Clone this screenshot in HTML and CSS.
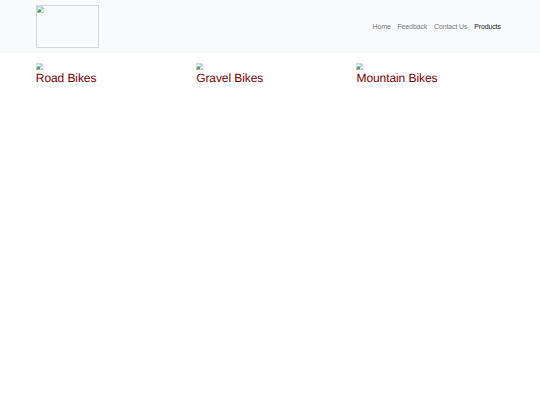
FILE: index.html
```
<!DOCTYPE html>
<html lang="en">
<head>
    <meta charset="utf-8">
    <meta name="viewport" content="width=device-width, initial-scale=1.0">
    <title>Products</title>
    <link rel="stylesheet" href="styles.css">
</head>
<body>
    <svg class="defs" width="0" height="0">
        <symbol id="broken" viewBox="0 0 16 16">
            <path d="M1 1h10l4 4v10H1z" fill="#c3d9f5"/>
            <path d="M1 12l5-5 8 8H1z" fill="#4fa548"/>
            <path d="M3 5.5a2 2 0 0 1 4-.5 1.5 1.5 0 0 1 1 2H3z" fill="#fff"/>
            <path d="M15 7L7 15h3l5-5z" fill="#fff"/>
            <path d="M8 15.5H.5V.5H11L15.5 5v3M11 .5V5h4.5M15.5 11v4.5H11" fill="none" stroke="#a5a9ad"/>
        </symbol>
    </svg>
    <nav class="navbar">
        <div class="container">
            <a class="brand" href="#"><svg class="icon"><use href="#broken"/></svg></a>
            <ul class="nav">
                <li><a href="#">Home</a></li>
                <li><a href="#">Feedback</a></li>
                <li><a href="#">Contact Us</a></li>
                <li><a class="active" href="#">Products</a></li>
            </ul>
        </div>
    </nav>
    <div class="container products">
        <a class="product" href="#">
            <svg class="icon"><use href="#broken"/></svg>
            <h3>Road Bikes</h3>
        </a>
        <a class="product" href="#">
            <svg class="icon"><use href="#broken"/></svg>
            <h3>Gravel Bikes</h3>
        </a>
        <a class="product" href="#">
            <svg class="icon"><use href="#broken"/></svg>
            <h3>Mountain Bikes</h3>
        </a>
    </div>
</body>
</html>
```
FILE: styles.css
```
* {
    box-sizing: border-box;
}
body {
    margin: 0;
    background-color: #fff;
    font-family: "Liberation Sans", Arial, sans-serif;
    text-rendering: geometricPrecision;
}
a {
    text-decoration: none;
}
.defs {
    display: block;
}
.container {
    width: 481px;
    margin: 0 auto;
    padding: 0 6.3px;
}
.navbar {
    height: 53px;
    padding-top: 5px;
    background-color: #f9fafc;
}
.navbar .container {
    display: flex;
    align-items: center;
    justify-content: space-between;
}
.brand {
    width: 63px;
    height: 43px;
    border: 1px solid #d6d7d8;
}
.icon {
    display: block;
    width: 7px;
    height: 7px;
}
.nav {
    display: flex;
    gap: 6.75px;
    margin: 0;
    padding: 0 3.4px 0 0;
    list-style: none;
    font-size: 7px;
    letter-spacing: -0.12px;
    text-rendering: auto;
}
.nav a {
    color: #7c7d7d;
}
.nav a.active {
    color: #191919;
}
.products {
    display: grid;
    grid-template-columns: repeat(3, 160.35px);
    padding-top: 10px;
}
.product {
    color: #800000;
}
.product h3 {
    margin: 1px 0 0;
    font-size: 12px;
    font-weight: 400;
    line-height: 14px;
    letter-spacing: -0.08px;
}
```
